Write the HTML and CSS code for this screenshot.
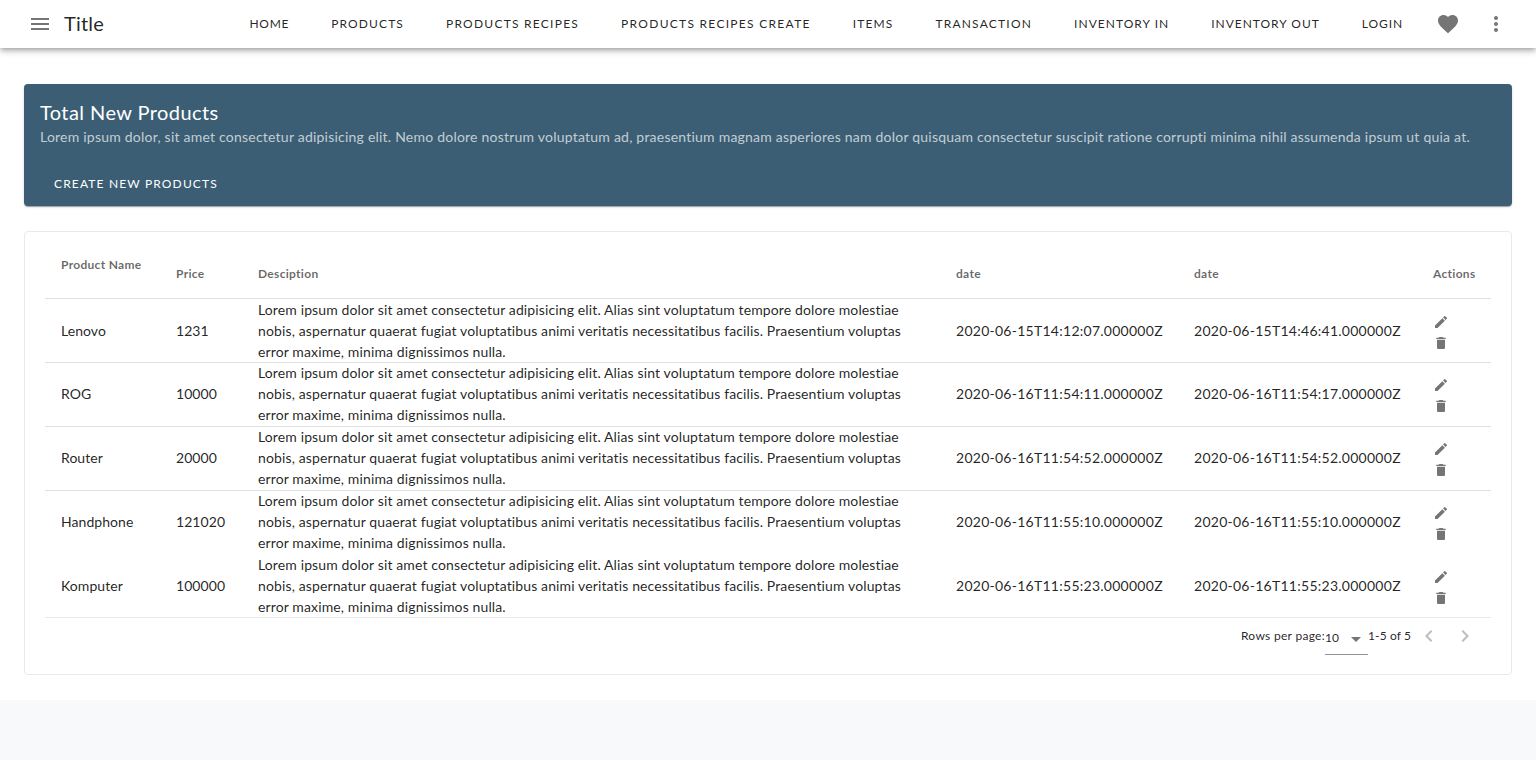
FILE: index.html
```html
<!DOCTYPE html>
<html lang="en">
<head>
<meta charset="utf-8">
<title>Title</title>
<link rel="stylesheet" href="styles.css">
</head>
<body>
<div class="app">
  <header class="topbar">
    <button class="icon-btn menu" aria-label="menu">
      <svg viewBox="0 0 24 24" width="24" height="24"><path d="M3 18h18v-2H3v2zm0-5h18v-2H3v2zm0-7v2h18V6H3z"/></svg>
    </button>
    <div class="title">Title</div>
    <nav class="nav">
      <a>Home</a><a>Products</a><a>Products Recipes</a><a>Products Recipes Create</a><a>Items</a><a>Transaction</a><a>Inventory In</a><a>Inventory Out</a><a>Login</a>
    </nav>
    <button class="icon-btn heart" aria-label="favourite">
      <svg viewBox="0 0 24 24" width="24" height="24"><path d="M12 21.35l-1.45-1.32C5.4 15.36 2 12.28 2 8.5 2 5.42 4.42 3 7.5 3c1.74 0 3.41.81 4.5 2.09C13.09 3.81 14.76 3 16.5 3 19.58 3 22 5.42 22 8.5c0 3.78-3.4 6.86-8.55 11.54L12 21.35z"/></svg>
    </button>
    <button class="icon-btn dots" aria-label="more">
      <svg viewBox="0 0 24 24" width="24" height="24"><path d="M12 8c1.1 0 2-.9 2-2s-.9-2-2-2-2 .9-2 2 .9 2 2 2zm0 2c-1.1 0-2 .9-2 2s.9 2 2 2 2-.9 2-2-.9-2-2-2zm0 6c-1.1 0-2 .9-2 2s.9 2 2 2 2-.9 2-2-.9-2-2-2z"/></svg>
    </button>
  </header>

  <main class="content">
    <section class="banner">
      <h1 class="banner-title">Total New Products</h1>
      <p class="banner-text">Lorem ipsum dolor, sit amet consectetur adipisicing elit. Nemo dolore nostrum voluptatum ad, praesentium magnam asperiores nam dolor quisquam consectetur suscipit ratione corrupti minima nihil assumenda ipsum ut quia at.</p>
      <a class="banner-btn">Create New Products</a>
    </section>

    <section class="card">
      <table class="table">
        <thead>
          <tr>
            <th class="c-name"><span class="raised">Product Name</span></th>
            <th class="c-price">Price</th>
            <th class="c-desc">Desciption</th>
            <th class="c-date">date</th>
            <th class="c-date2">date</th>
            <th class="c-act">Actions</th>
          </tr>
        </thead>
        <tbody>
          <tr>
            <td>Lenovo</td><td>1231</td>
            <td class="desc">Lorem ipsum dolor sit amet consectetur adipisicing elit. Alias sint voluptatum tempore dolore molestiae nobis, aspernatur quaerat fugiat voluptatibus animi veritatis necessitatibus facilis. Praesentium voluptas error maxime, minima dignissimos nulla.</td>
            <td class="stamp">2020-06-15T14:12:07.000000Z</td><td class="stamp">2020-06-15T14:46:41.000000Z</td>
            <td class="acts"><svg viewBox="0 0 24 24" width="16" height="16"><path d="M3 17.25V21h3.75L17.81 9.94l-3.75-3.75L3 17.25zM20.71 7.04a1 1 0 0 0 0-1.41l-2.34-2.34a1 1 0 0 0-1.41 0l-1.83 1.83 3.75 3.75 1.83-1.83z"/></svg><svg viewBox="0 0 24 24" width="16" height="16"><path d="M6 19c0 1.1.9 2 2 2h8c1.1 0 2-.9 2-2V7H6v12zM19 4h-3.5l-1-1h-5l-1 1H5v2h14V4z"/></svg></td>
          </tr>
          <tr>
            <td>ROG</td><td>10000</td>
            <td class="desc">Lorem ipsum dolor sit amet consectetur adipisicing elit. Alias sint voluptatum tempore dolore molestiae nobis, aspernatur quaerat fugiat voluptatibus animi veritatis necessitatibus facilis. Praesentium voluptas error maxime, minima dignissimos nulla.</td>
            <td class="stamp">2020-06-16T11:54:11.000000Z</td><td class="stamp">2020-06-16T11:54:17.000000Z</td>
            <td class="acts"><svg viewBox="0 0 24 24" width="16" height="16"><path d="M3 17.25V21h3.75L17.81 9.94l-3.75-3.75L3 17.25zM20.71 7.04a1 1 0 0 0 0-1.41l-2.34-2.34a1 1 0 0 0-1.41 0l-1.83 1.83 3.75 3.75 1.83-1.83z"/></svg><svg viewBox="0 0 24 24" width="16" height="16"><path d="M6 19c0 1.1.9 2 2 2h8c1.1 0 2-.9 2-2V7H6v12zM19 4h-3.5l-1-1h-5l-1 1H5v2h14V4z"/></svg></td>
          </tr>
          <tr>
            <td>Router</td><td>20000</td>
            <td class="desc">Lorem ipsum dolor sit amet consectetur adipisicing elit. Alias sint voluptatum tempore dolore molestiae nobis, aspernatur quaerat fugiat voluptatibus animi veritatis necessitatibus facilis. Praesentium voluptas error maxime, minima dignissimos nulla.</td>
            <td class="stamp">2020-06-16T11:54:52.000000Z</td><td class="stamp">2020-06-16T11:54:52.000000Z</td>
            <td class="acts"><svg viewBox="0 0 24 24" width="16" height="16"><path d="M3 17.25V21h3.75L17.81 9.94l-3.75-3.75L3 17.25zM20.71 7.04a1 1 0 0 0 0-1.41l-2.34-2.34a1 1 0 0 0-1.41 0l-1.83 1.83 3.75 3.75 1.83-1.83z"/></svg><svg viewBox="0 0 24 24" width="16" height="16"><path d="M6 19c0 1.1.9 2 2 2h8c1.1 0 2-.9 2-2V7H6v12zM19 4h-3.5l-1-1h-5l-1 1H5v2h14V4z"/></svg></td>
          </tr>
          <tr>
            <td>Handphone</td><td>121020</td>
            <td class="desc">Lorem ipsum dolor sit amet consectetur adipisicing elit. Alias sint voluptatum tempore dolore molestiae nobis, aspernatur quaerat fugiat voluptatibus animi veritatis necessitatibus facilis. Praesentium voluptas error maxime, minima dignissimos nulla.</td>
            <td class="stamp">2020-06-16T11:55:10.000000Z</td><td class="stamp">2020-06-16T11:55:10.000000Z</td>
            <td class="acts"><svg viewBox="0 0 24 24" width="16" height="16"><path d="M3 17.25V21h3.75L17.81 9.94l-3.75-3.75L3 17.25zM20.71 7.04a1 1 0 0 0 0-1.41l-2.34-2.34a1 1 0 0 0-1.41 0l-1.83 1.83 3.75 3.75 1.83-1.83z"/></svg><svg viewBox="0 0 24 24" width="16" height="16"><path d="M6 19c0 1.1.9 2 2 2h8c1.1 0 2-.9 2-2V7H6v12zM19 4h-3.5l-1-1h-5l-1 1H5v2h14V4z"/></svg></td>
          </tr>
          <tr>
            <td>Komputer</td><td>100000</td>
            <td class="desc">Lorem ipsum dolor sit amet consectetur adipisicing elit. Alias sint voluptatum tempore dolore molestiae nobis, aspernatur quaerat fugiat voluptatibus animi veritatis necessitatibus facilis. Praesentium voluptas error maxime, minima dignissimos nulla.</td>
            <td class="stamp">2020-06-16T11:55:23.000000Z</td><td class="stamp">2020-06-16T11:55:23.000000Z</td>
            <td class="acts"><svg viewBox="0 0 24 24" width="16" height="16"><path d="M3 17.25V21h3.75L17.81 9.94l-3.75-3.75L3 17.25zM20.71 7.04a1 1 0 0 0 0-1.41l-2.34-2.34a1 1 0 0 0-1.41 0l-1.83 1.83 3.75 3.75 1.83-1.83z"/></svg><svg viewBox="0 0 24 24" width="16" height="16"><path d="M6 19c0 1.1.9 2 2 2h8c1.1 0 2-.9 2-2V7H6v12zM19 4h-3.5l-1-1h-5l-1 1H5v2h14V4z"/></svg></td>
          </tr>
        </tbody>
      </table>
      <div class="pager">
        <span class="pager-label">Rows per page:</span>
        <div class="select"><span>10</span><svg viewBox="0 0 24 24" width="24" height="24"><path d="M7 10l5 5 5-5z"/></svg></div>
        <span class="pager-range">1-5 of 5</span>
        <svg class="chev" viewBox="0 0 24 24" width="24" height="24"><path d="M15.41 7.41L14 6l-6 6 6 6 1.41-1.41L10.83 12z"/></svg>
        <svg class="chev" viewBox="0 0 24 24" width="24" height="24"><path d="M10 6L8.59 7.41 13.17 12l-4.58 4.59L10 18l6-6z"/></svg>
      </div>
    </section>
  </main>
</div>
</body>
</html>
```

FILE: styles.css
```css
* { box-sizing: border-box; }
html, body { margin: 0; height: 100%; }
body {
  background: #f8f9fb;
  font-family: "Lato", "Noto Sans", sans-serif;
  color: rgba(0, 0, 0, 0.87);
  overflow: hidden;
}
.app { height: 700px; background: #fff; }

.topbar {
  height: 48px;
  display: flex;
  align-items: center;
  padding-left: 28px;
  padding-right: 28px;
  background: #fff;
  box-shadow: 0 2px 4px -1px rgba(0,0,0,.2), 0 4px 5px 0 rgba(0,0,0,.14), 0 1px 10px 0 rgba(0,0,0,.12);
}
.icon-btn {
  border: 0;
  padding: 0;
  background: none;
  display: flex;
  width: 24px;
  height: 24px;
  fill: #757575;
}
.title { margin-left: 12px; font-size: 20px; line-height: 24px; letter-spacing: 0.2px; padding-bottom: 2px; }
.nav {
  margin-left: auto;
  display: flex;
  gap: 42px;
  padding-bottom: 2px;
  font-size: 12px;
  font-weight: 400;
  text-transform: uppercase;
  letter-spacing: 1.12px;
}
.nav a:nth-child(1) { letter-spacing: 0.72px; }
.nav a:nth-child(3) { letter-spacing: 1.25px; }
.nav a:nth-child(4) { letter-spacing: 1.29px; }
.nav a:nth-child(6) { letter-spacing: 1.21px; }
.nav a:nth-child(7) { letter-spacing: 1.03px; }
.nav a:nth-child(8) { letter-spacing: 0.97px; }
.nav a:nth-child(9) { letter-spacing: 0.92px; }
.heart { margin-left: 33px; }
.dots { margin-left: 24px; }

.content { padding: 36px 24px 0; }
.banner {
  height: 122px;
  padding: 15px 16px 0;
  background: #3b5e74;
  border-radius: 4px;
  box-shadow: 0 2px 1px -1px rgba(0,0,0,.2), 0 1px 1px 0 rgba(0,0,0,.14), 0 1px 3px 0 rgba(0,0,0,.12);
  color: #fff;
}
.banner-title { margin: 0; font-size: 20px; font-weight: 400; line-height: 27px; letter-spacing: 0.42px; }
.banner-text { margin: 0; font-size: 14px; line-height: 22px; color: rgba(255,255,255,.7); letter-spacing: 0.222px; white-space: nowrap; }
.banner-btn {
  display: block;
  margin: 28px 0 0 14px;
  font-size: 12px;
  line-height: 16px;
  text-transform: uppercase;
  letter-spacing: 1.15px;
}

.card {
  margin-top: 25px;
  height: 444px;
  padding: 20px 20px 0;
  border: 1px solid #e9e9e9;
  border-radius: 4px;
}
.table { width: 1446px; border-collapse: collapse; table-layout: fixed; }
.table th {
  height: 46px;
  padding: 0 16px 2px;
  text-align: left;
  font-size: 12px;
  font-weight: 700;
  letter-spacing: 0.3px;
  color: rgba(0,0,0,.6);
  vertical-align: middle;
  border-bottom: 1px solid #e0e0e0;
}
.raised { display: block; transform: translateY(-9px); }
.c-name { width: 115px; }
.c-price { width: 82px; }
.c-desc { width: 698px; }
.c-date { width: 238px; }
.c-date2 { width: 239px; }
.c-act { width: 74px; }
.table td {
  padding: 0 16px;
  font-size: 14px;
  line-height: 21px;
  height: 64px;
  letter-spacing: 0.06px;
  border-bottom: 1px solid #e0e0e0;
  vertical-align: middle;
}
.table tbody tr:not(:first-child) td:not(.acts) { transform: translateY(-1px); }
.table tbody tr:first-child td.acts { transform: translateY(1px); }
.table tbody tr:nth-child(4) td { border-bottom-color: transparent; }
.table tbody tr:last-child td { border-bottom: 0; }
.table td.desc { padding-right: 36px; letter-spacing: 0.125px; }
.table td.stamp { letter-spacing: 0.26px; white-space: nowrap; }
.table td.acts { line-height: 0; padding-top: 2px; }
.acts svg { display: block; width: 16px; height: 16px; margin-bottom: 5px; fill: #757575; }
.acts svg:last-child { margin-bottom: 0; }

.pager {
  display: flex;
  justify-content: flex-end;
  align-items: flex-start;
  margin-top: -1px;
  border-top: 1px solid #e9e9e9;
  padding-right: 14px;
  font-size: 12px;
  color: rgba(0,0,0,.87);
}
.pager-label { margin-top: 10px; letter-spacing: 0.3px; }
.select {
  width: 43px;
  height: 37px;
  display: flex;
  justify-content: space-between;
  padding-top: 12px;
  border-bottom: 1px solid #949494;
  fill: #757575;
}
.select svg { margin-top: -3px; margin-right: 0; width: 24px; height: 24px; }
.pager-range { margin-top: 10px; margin-right: 6px; letter-spacing: 0.1px; }
.chev { margin-top: 6px; fill: #bdbdbd; }
.chev + .chev { margin-left: 12px; }
```
